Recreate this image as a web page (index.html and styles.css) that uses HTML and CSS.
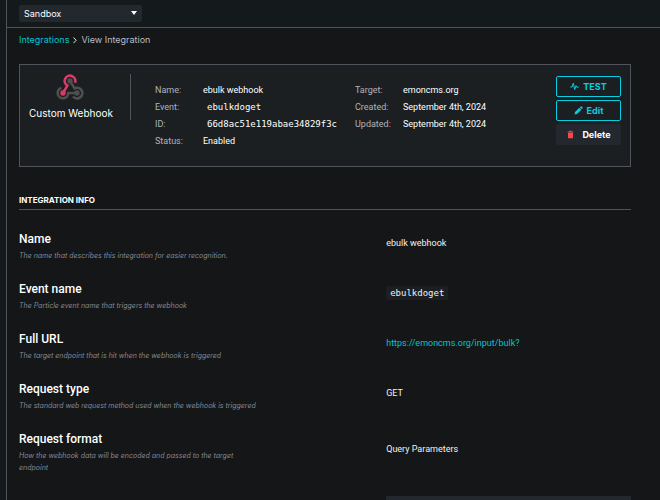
FILE: index.html
```html
<!DOCTYPE html>
<html lang="en">
    <head>
        <title>View Integration</title>
        <meta charset="UTF-8" />
        <meta name="viewport" content="width=device-width, initial-scale=1.0" />
        <link rel="stylesheet" href="styles.css">
    </head>
    <body>
        <div class="sidebar"></div>
        <div class="page">
            <header class="topbar">
                <div class="product">
                    <select class="product-select" aria-label="Product">
                        <option>Sandbox</option>
                    </select>
                    <svg class="caret" viewBox="0 0 6 4"><path d="M0 0 H6 L3 4 Z" /></svg>
                </div>
            </header>

            <main class="content">
                <nav class="breadcrumbs" aria-label="Breadcrumb">
                    <a href="#">Integrations</a>
                    <svg class="chevron" viewBox="0 0 4 7"><path d="M0.5 0.5 L3.2 3.3 L0.5 6.1" /></svg>
                    <span>View Integration</span>
                </nav>

                <section class="card">
                    <div class="card-type">
                        <svg class="webhook-logo" viewBox="0 0 28 26">
                            <g fill="none" stroke-width="2.6">
                                <path class="gray" d="M14 7 L18.6 14.4 A5.3 5.3 0 1 1 17 22.5" />
                                <path class="gray" d="M21 19 H12.3 A5.3 5.3 0 1 1 5.4 13.9" />
                                <path class="pink" d="M7 19 L11.4 11.6 A5.3 5.3 0 1 1 19 8.8" />
                            </g>
                            <circle class="gray-dot" cx="14" cy="7" r="2.7" />
                            <circle class="gray-dot" cx="21" cy="19" r="2.7" />
                            <circle class="pink-dot" cx="7" cy="19" r="2.7" />
                        </svg>
                        <div class="card-title">Custom Webhook</div>
                    </div>

                    <dl class="facts facts-main">
                        <dt>Name:</dt>
                        <dd>ebulk webhook</dd>
                        <dt>Event:</dt>
                        <dd><code>ebulkdoget</code></dd>
                        <dt>ID:</dt>
                        <dd><code>66d8ac51e119abae34829f3c</code></dd>
                        <dt>Status:</dt>
                        <dd>Enabled</dd>
                    </dl>

                    <dl class="facts">
                        <dt>Target:</dt>
                        <dd>emoncms.org</dd>
                        <dt>Created:</dt>
                        <dd>September 4th, 2024</dd>
                        <dt>Updated:</dt>
                        <dd>September 4th, 2024</dd>
                    </dl>

                    <div class="actions">
                        <button class="btn btn-outline" type="button">
                            <svg viewBox="0 0 9 9"><path class="line" d="M0.3 5 H2 L3.3 1.2 L4.7 7.6 L6 3.6 L6.8 5.2 H8.7" /></svg>
                            TEST
                        </button>
                        <button class="btn btn-outline" type="button">
                            <svg viewBox="0 0 9 9"><path d="M0.6 8.4 L1 6 L5.3 1.7 L7.3 3.7 L3 8 Z M5.8 1.2 L6.7 0.4 Q7.2 0 7.6 0.4 L8.6 1.4 Q9 1.8 8.6 2.3 L7.8 3.2 Z" /></svg>
                            Edit
                        </button>
                        <button class="btn btn-delete" type="button">
                            <svg viewBox="0 0 9 9"><path d="M1.6 1.4 H3.2 L3.7 0.7 H5.3 L5.8 1.4 H7.4 V2.5 H1.6 Z M2 3 H7 V7.7 Q7 8.3 6.4 8.3 H2.6 Q2 8.3 2 7.7 Z" /></svg>
                            Delete
                        </button>
                    </div>
                </section>

                <h2 class="section-title">Integration info</h2>

                <div class="row">
                    <div class="row-label">
                        <h3>Name</h3>
                        <p>The name that describes this integration for easier recognition.</p>
                    </div>
                    <div class="row-value">ebulk webhook</div>
                </div>
                <div class="row">
                    <div class="row-label">
                        <h3>Event name</h3>
                        <p>The Particle event name that triggers the webhook</p>
                    </div>
                    <div class="row-value"><code>ebulkdoget</code></div>
                </div>
                <div class="row">
                    <div class="row-label">
                        <h3>Full URL</h3>
                        <p>The target endpoint that is hit when the webhook is triggered</p>
                    </div>
                    <div class="row-value"><a href="#">https://emoncms.org/input/bulk?</a></div>
                </div>
                <div class="row">
                    <div class="row-label">
                        <h3>Request type</h3>
                        <p>The standard web request method used when the webhook is triggered</p>
                    </div>
                    <div class="row-value">GET</div>
                </div>
                <div class="row">
                    <div class="row-label">
                        <h3>Request format</h3>
                        <p>How the webhook data will be encoded and passed to the target endpoint</p>
                    </div>
                    <div class="row-value">Query Parameters</div>
                </div>
                <div class="row">
                    <div class="row-label"></div>
                    <div class="row-value code-block"></div>
                </div>
            </main>
        </div>
    </body>
</html>
```
FILE: styles.css
```css
* {
    box-sizing: border-box;
}
body {
    display: flex;
    height: 100vh;
    margin: 0;
    overflow: hidden;
    background-color: #141618;
    color: #f0f2f4;
    font-family: Roboto, "Liberation Sans", sans-serif;
    font-size: 9px;
    line-height: 12px;
}
h2, h3, p, dl, dd {
    margin: 0;
}
a {
    color: #04c3d0;
    text-decoration: none;
}
code {
    padding: 2px 4px;
    border-radius: 2px;
    background-color: #1b1f22;
    font-family: "DejaVu Sans Mono", "Liberation Mono", monospace;
    font-size: 9px;
}

.sidebar {
    flex: none;
    width: 7px;
    border-right: 1px solid #50535c;
    background-color: #14191c;
}
.page {
    display: flex;
    flex: 1;
    flex-direction: column;
    min-width: 0;
}
.topbar {
    flex: none;
    padding: 5px 12px;
    border-bottom: 1px solid #50535c;
    background-color: #14191c;
}
.product {
    position: relative;
    width: 123px;
}
.product-select {
    display: block;
    width: 100%;
    height: 17px;
    padding: 0 5px;
    border: none;
    border-radius: 2px;
    appearance: none;
    background-color: #23282f;
    color: #fff;
    font: inherit;
    font-family: Inter, sans-serif;
}
.caret {
    position: absolute;
    top: 6px;
    right: 5px;
    width: 6px;
    height: 4px;
    fill: #fff;
    pointer-events: none;
}
.content {
    flex: 1;
    min-height: 0;
    padding: 6px 29px 0 12px;
    overflow-y: auto;
    scrollbar-width: none;
}

.breadcrumbs {
    display: flex;
    align-items: center;
    gap: 4px;
    color: #b9bcc2;
    font-family: Inter, sans-serif;
}
.chevron {
    width: 4px;
    height: 7px;
    fill: none;
    stroke: #e4e6e8;
}

.card {
    display: flex;
    height: 103px;
    margin-top: 18px;
    padding: 9px 9px 0;
    border: 1px solid #50535c;
    background-color: #1b1f22;
}
.card-type {
    align-self: flex-start;
    flex: none;
    width: 102px;
    height: 46px;
    border-right: 1px solid #50535c;
}
.webhook-logo {
    display: block;
    width: 28px;
    height: 26px;
    margin-left: 27px;
}
.gray {
    stroke: #4f4f50;
}
.pink {
    stroke: #d93b69;
}
.gray-dot {
    fill: #4f4f50;
}
.pink-dot {
    fill: #d93b69;
}
.card-title {
    margin-top: 6px;
    color: #fff;
    font-family: Inter, sans-serif;
    font-size: 10px;
    line-height: 14px;
}
.facts {
    display: grid;
    grid-template-columns: 48px auto;
    grid-auto-rows: 17px;
    align-content: start;
    align-items: center;
    padding-top: 7px;
}
.facts-main {
    width: 200px;
    margin-left: 24px;
}
.facts dt {
    color: #b0b4ba;
}
.facts dd {
    color: #fff;
}
.actions {
    display: flex;
    flex-direction: column;
    gap: 3px;
    width: 65px;
    margin-left: auto;
    padding-top: 2px;
}
.btn {
    display: flex;
    align-items: center;
    justify-content: center;
    gap: 4px;
    height: 21px;
    padding: 0;
    border: 1px solid transparent;
    border-radius: 2px;
    font: inherit;
    font-family: Inter, sans-serif;
    font-weight: 700;
}
.btn svg {
    width: 9px;
    height: 9px;
    fill: currentColor;
}
.btn .line {
    fill: none;
    stroke: currentColor;
}
.btn-outline {
    border-color: #02cfe0;
    background-color: transparent;
    color: #02cfe0;
}
.btn-delete {
    gap: 7px;
    background-color: #23282f;
    color: #fff;
}
.btn-delete svg {
    fill: #f5484f;
}

.section-title {
    margin: 27px 0 20px;
    padding-bottom: 3px;
    border-bottom: 1px solid #50535c;
    color: #fff;
    font-family: Inter, sans-serif;
    font-size: 8px;
    font-weight: 700;
    text-transform: uppercase;
}
.row {
    display: flex;
    align-items: center;
    margin-bottom: 18px;
}
.row-label {
    width: 40%;
    margin-right: 20%;
}
.row-label h3 {
    margin-bottom: 2px;
    color: #fff;
    font-size: 12px;
    font-weight: 500;
    line-height: 18px;
}
.row-label p {
    color: #858992;
    font-family: Inter, sans-serif;
    font-size: 7px;
    font-style: italic;
}
.row-value {
    flex: 1;
    padding-bottom: 6px;
}
.code-block {
    height: 80px;
    margin-top: 4px;
    background-color: #23282f;
}
```
